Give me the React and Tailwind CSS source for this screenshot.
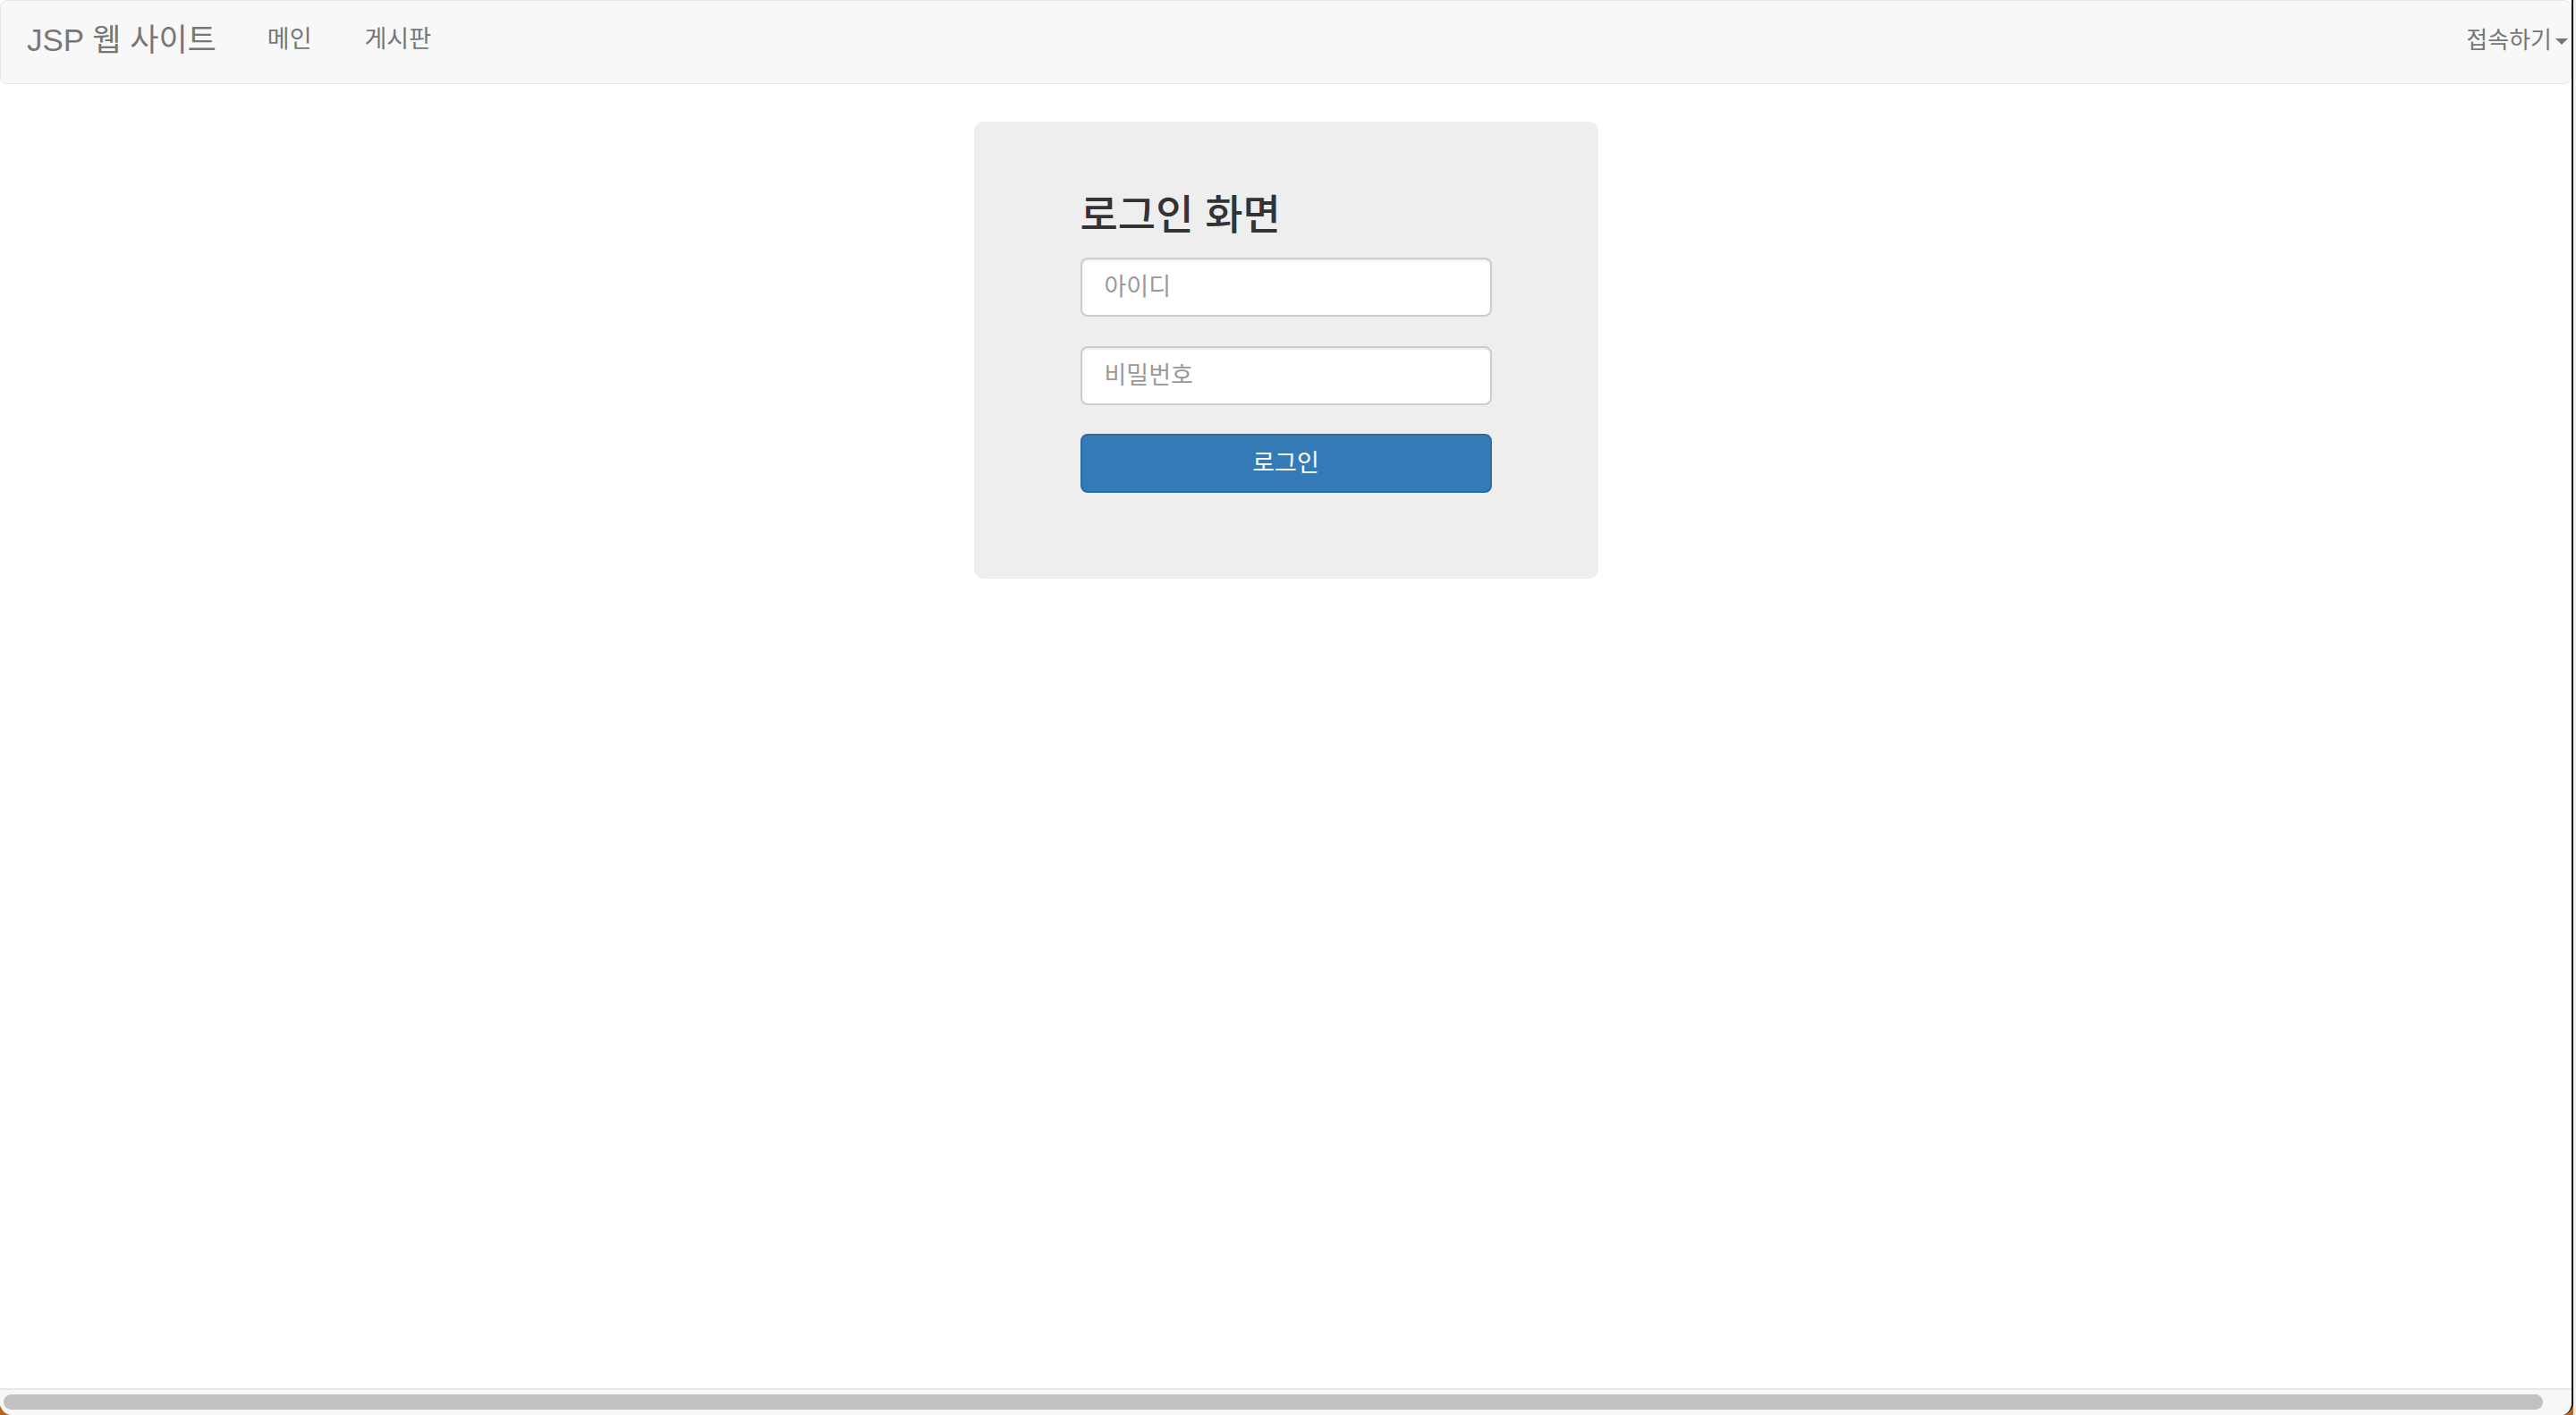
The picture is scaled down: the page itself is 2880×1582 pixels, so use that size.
import React from 'react';

const font = { fontFamily: '"Liberation Sans", "Noto Sans CJK KR", sans-serif' };

function Navbar() {
  return (
    <nav className="h-[94px] shrink-0 bg-[#f8f8f8] border border-[#e7e7e7] rounded-[8px] flex items-center pb-[5px] text-[#777]">
      <a className="ml-[29px] text-[35px] leading-none">JSP 웹 사이트</a>
      <ul className="flex items-center ml-[57px] gap-[59px] text-[27px] leading-none">
        <li>메인</li>
        <li>게시판</li>
      </ul>
      <div className="ml-auto mr-[3px] flex items-center text-[26px] leading-none">
        <span>접속하기</span>
        <span className="ml-[4px] mt-[4px] w-0 h-0 border-l-[7px] border-r-[7px] border-t-[7px] border-l-transparent border-r-transparent border-t-[#777]"></span>
      </div>
    </nav>
  );
}

function LoginCard() {
  return (
    <div className="w-[698px] mx-auto mt-[42px] bg-[#eeeeee] rounded-[11px] pt-[80px] pb-[96px] px-[119px]">
      <h3 className="h-[48px] flex items-center text-[46px] font-medium text-[#333] mb-[24px]">로그인 화면</h3>
      <div className="flex flex-col">
        <input
          type="text"
          placeholder="아이디"
          className="h-[66px] w-full bg-white border-2 border-[#cccccc] rounded-[8px] px-[25px] text-[27px] text-[#555] placeholder:text-[#999] shadow-[inset_0_2px_2px_rgba(0,0,0,0.075)] outline-none"
        />
        <input
          type="password"
          placeholder="비밀번호"
          className="mt-[33px] h-[66px] w-full bg-white border-2 border-[#cccccc] rounded-[8px] px-[25px] text-[27px] text-[#555] placeholder:text-[#999] shadow-[inset_0_2px_2px_rgba(0,0,0,0.075)] outline-none"
        />
        <button className="mt-[32px] h-[66px] w-full bg-[#337ab7] border-2 border-[#2e6da4] rounded-[8px] text-white text-[27px]">
          로그인
        </button>
      </div>
    </div>
  );
}

export default function App() {
  return (
    <div className="w-[2880px] h-[1582px] bg-[#b5651d] flex overflow-hidden" style={font}>
      <div className="w-[2877px] h-full bg-white border-r-2 border-[#111] rounded-br-[14px] rounded-bl-[14px] overflow-hidden flex flex-col">
        <Navbar />
        <main className="flex-1">
          <LoginCard />
        </main>
        <div className="h-[30px] shrink-0 bg-[#f7f7f7] border-t-2 border-[#e8e8e8] flex items-center px-[4px] pb-[2px]">
          <div className="h-[17px] w-[2839px] rounded-full bg-[#c1c1c1]"></div>
        </div>
      </div>
      <div className="flex-1 bg-[#f2f2f2]"></div>
    </div>
  );
}
